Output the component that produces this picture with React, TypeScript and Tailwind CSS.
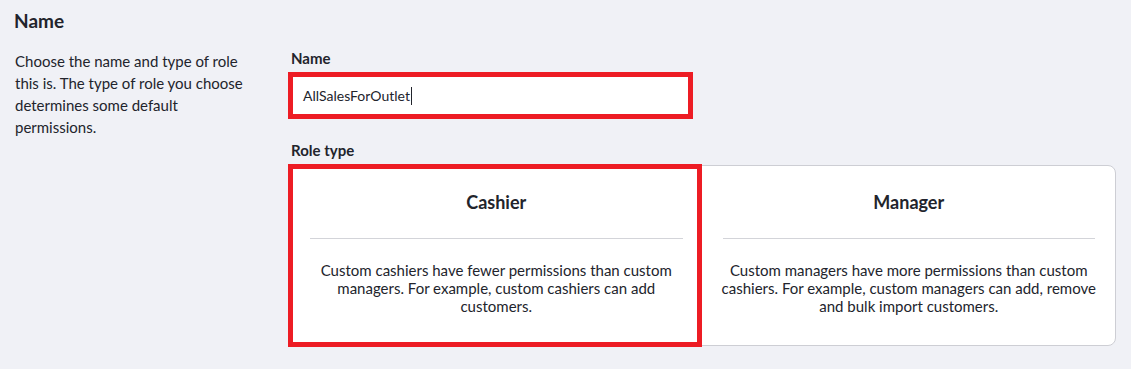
const roleTypes = [
  {
    id: 'cashier',
    title: 'Cashier',
    text: 'Custom cashiers have fewer permissions than custom managers. For example, custom cashiers can add customers.',
  },
  {
    id: 'manager',
    title: 'Manager',
    text: 'Custom managers have more permissions than custom cashiers. For example, custom managers can add, remove and bulk import customers.',
  },
]

export default function App() {
  return (
    <div className="min-h-[369px] w-[1131px] bg-[#f0f1f6] text-[#22242c] font-['Lato','Liberation_Sans',sans-serif]">
      <div className="pl-[14px] pt-[9px]">
        <h2 className="text-[19px] font-bold leading-[24px]">Name</h2>
      </div>
      <div className="flex pl-[15px] pt-[15px]">
        <p className="w-[240px] pt-[2px] text-[15px] leading-[22px]">
          Choose the name and type of role this is. The type of role you choose determines some default permissions.
        </p>
        <div className="ml-[35px] w-[826px]">
          <label className="block pl-[1px] text-[15px] font-bold leading-[20px]">Name</label>
          <div className="mt-[4px] -ml-[2px] w-[405px] border-[5px] border-[#ed1c24] bg-white h-[47px] flex items-center">
            <span className="pl-[10px] text-[14px]">AllSalesForOutlet</span>
            <span className="ml-[1px] h-[18px] w-[1px] bg-[#22242c]" />
          </div>
          <label className="block mt-[21px] pl-[1px] text-[15px] font-bold leading-[20px]">Role type</label>
          <div className="relative mt-[5px] -ml-[1px] flex h-[181px] rounded-r-[8px] border border-[#cdced4] bg-white">
            {roleTypes.map((r) => (
              <div key={r.id} className="flex-1 px-[20px] pt-[23px] text-center">
                <h3 className="text-[18px] font-bold leading-[26px]">{r.title}</h3>
                <div className="mt-[23px] h-[1px] bg-[#d3d4d9]" />
                <p className="-mx-[4px] mt-[22px] text-[15px] leading-[18px]">{r.text}</p>
              </div>
            ))}
            <div className="absolute -left-[2px] -top-[2px] -bottom-[2px] w-[414px] border-[5px] border-[#ed1c24]" />
          </div>
        </div>
      </div>
    </div>
  )
}
